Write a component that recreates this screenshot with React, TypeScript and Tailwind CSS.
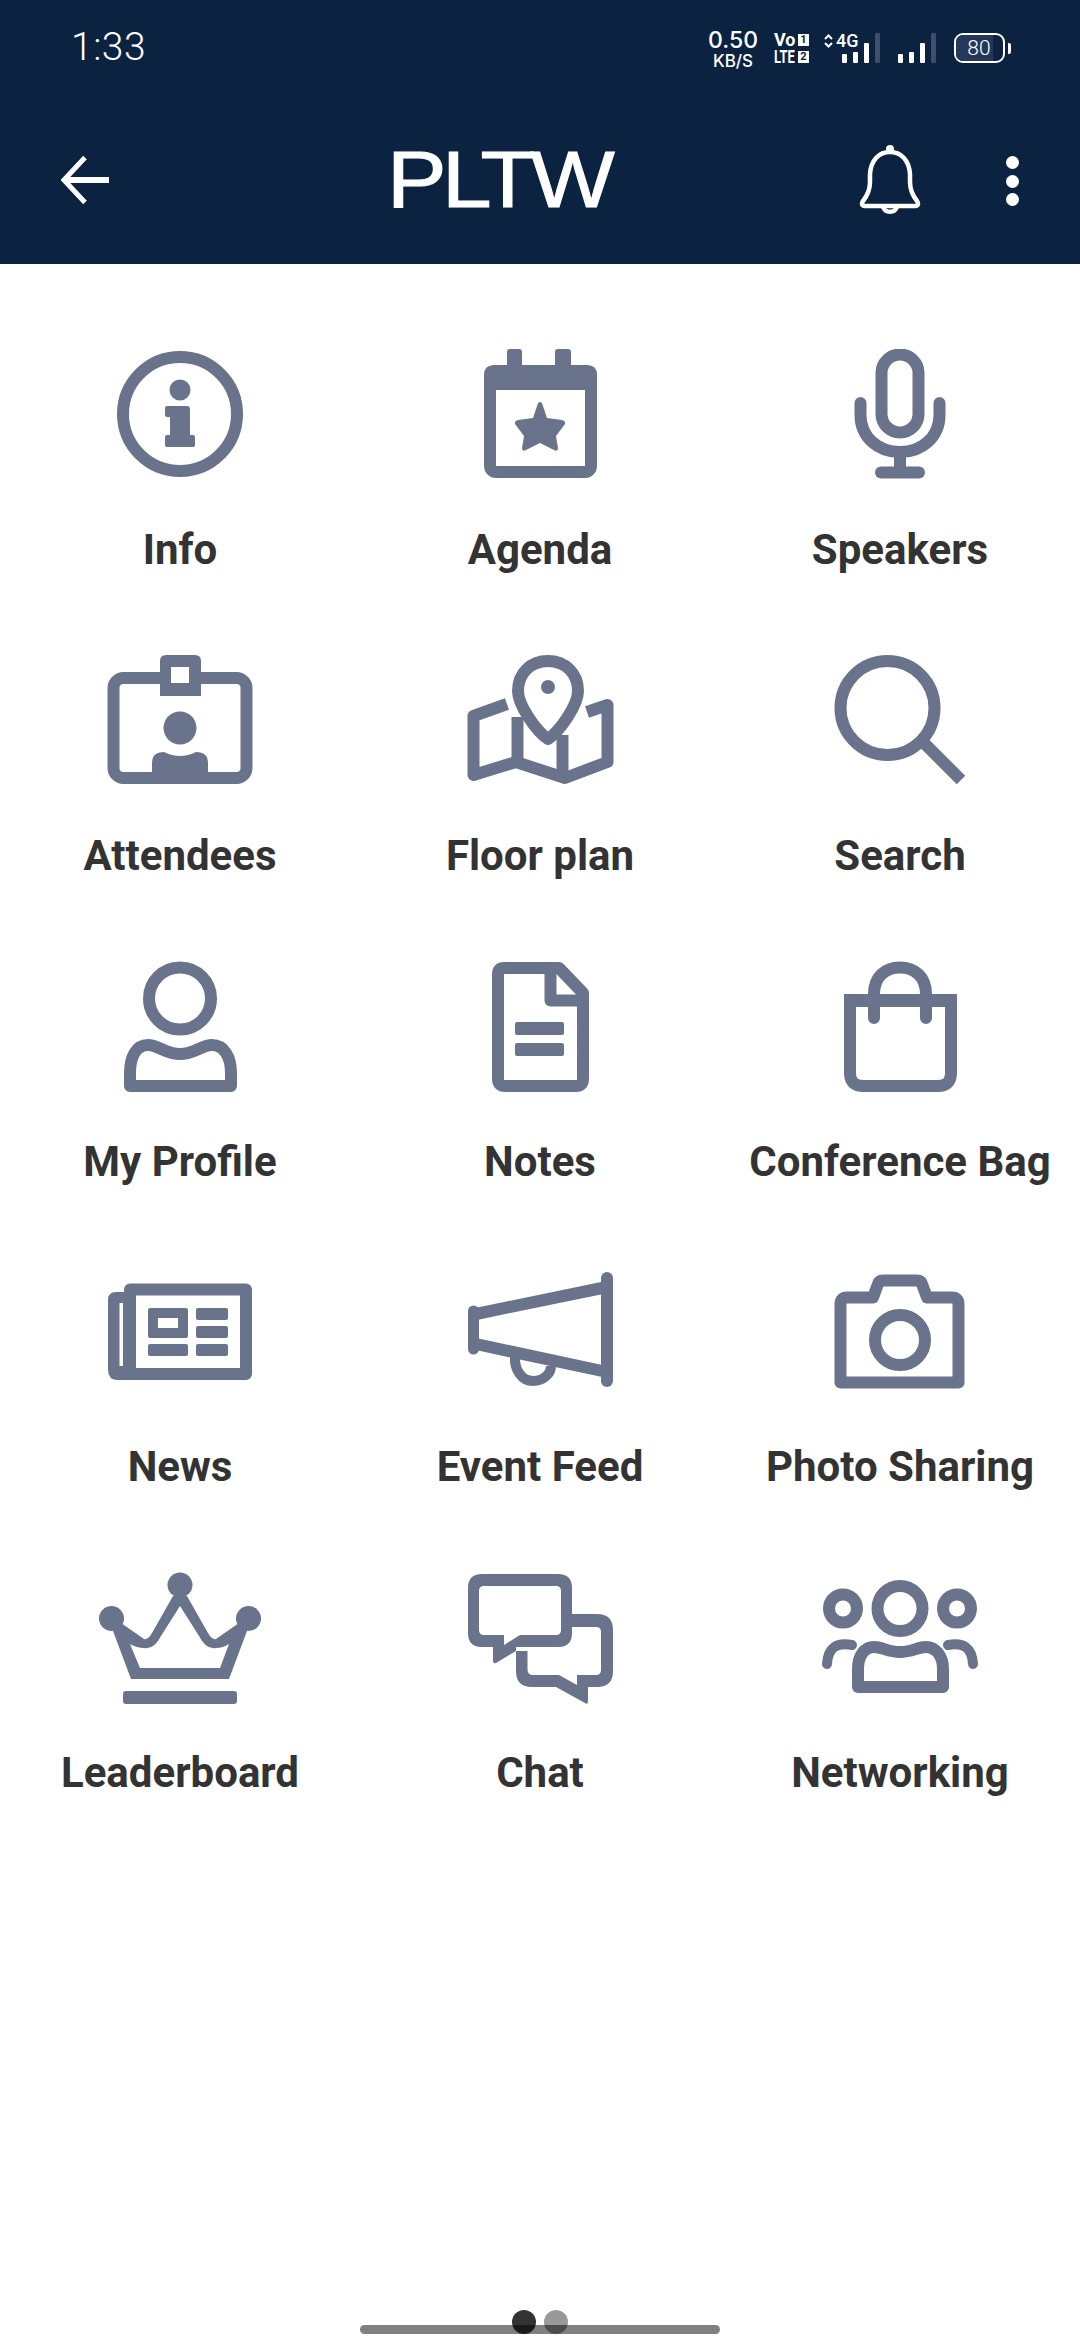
import { ReactNode } from "react";

type Item = {
  label: string;
  icon: ReactNode;
};

const icons = {
  info: (
    <>
      <circle cx="82" cy="65" r="57" />
      <g fill="currentColor" stroke="none">
        <circle cx="82" cy="41" r="10.5" />
        <path d="M69 57H89Q92 57 92 60V86H95Q97 86 97 88V96Q97 98 95 98H69Q67 98 67 96V88Q67 86 69 86H72V68H69Q67 68 67 66V59Q67 57 69 57Z" />
      </g>
    </>
  ),
  agenda: (
    <>
      <rect x="32" y="22" width="101" height="101" rx="6" />
      <g fill="currentColor" stroke="none">
        <path d="M26 41V26Q26 16 36 16H49V3Q49 0 52 0H61Q64 0 64 3V16H97V3Q97 0 100 0H110Q113 0 113 3V16H129Q139 16 139 26V41Z" />
        <path d="M82 53Q84 53 85 57L89 69L104 71Q108 72 107 75L98 87L100 99Q100 103 96 101L82 94L68 101Q64 103 64 99L66 87L57 75Q56 72 60 71L75 69L79 57Q80 53 82 53Z" />
      </g>
    </>
  ),
  speakers: (
    <>
      <rect x="63.5" y="5.5" width="37" height="78" rx="18.5" />
      <path d="M42.5 54V66C42.5 88 60 103 82 103S121.5 88 121.5 66V54" strokeLinecap="round" />
      <path d="M82 103V120" />
      <path d="M63 123.500H101" strokeLinecap="round" />
    </>
  ),
  attendees: (
    <>
      <rect x="15.500" y="23" width="133" height="100" rx="10" />
      <g fill="currentColor" stroke="none">
        <path fillRule="evenodd" d="M68 0H97Q103 0 103 6V41H62V6Q62 0 68 0ZM73 12V28H91V12Z" />
        <circle cx="82" cy="73" r="16.500" />
        <path d="M54 118V108Q54 97 66 97Q74 101 82 101T98 97Q110 97 110 108V118Z" />
      </g>
      <path d="M73 12V28H91V12Z" fill="#fff" stroke="none" />
    </>
  ),
  floorplan: (
    <>
      <path d="M90 6C73 6 60 18 60 36C60 50 78 76 90 84C102 76 120 50 120 36C120 18 107 6 90 6Z" strokeLinejoin="round" />
      <circle cx="90" cy="32" r="7" fill="currentColor" stroke="none" />
      <path d="M49 49L15.500 61V120L58 107L107 123L149.500 107V50L129 57" strokeLinejoin="round" />
      <path d="M59.500 62V107" />
      <path d="M104.500 80V123" />
    </>
  ),
  search: (
    <>
      <circle cx="69.500" cy="53" r="47" />
      <path d="M106 88L143 125" strokeWidth="12" />
    </>
  ),
  profile: (
    <>
      <circle cx="82" cy="37.500" r="31" />
      <path d="M32 125V112C32 96 38 84 50 84C60 84 68 93 82 93S104 84 114 84C126 84 133 96 133 112V125Z" strokeLinejoin="round" />
    </>
  ),
  notes: (
    <>
      <path d="M46 7H101L125 32V118Q125 125 118 125H47Q40 125 40 118V13Q40 7 46 7Z" strokeLinejoin="round" />
      <path d="M92.500 7V39.500H125" strokeLinejoin="round" />
      <g fill="currentColor" stroke="none">
        <rect x="57" y="61" width="49" height="13" rx="2" />
        <rect x="57" y="82" width="49" height="13" rx="2" />
      </g>
    </>
  ),
  bag: (
    <>
      <path d="M32 39.500H133V112Q133 125 120 125H45Q32 125 32 112Z" />
      <path d="M56 57V33C56 16 67 6.500 82 6.500S108 16 108 33V57" strokeLinecap="round" />
      <path d="M26 39.500H139" strokeWidth="13" />
    </>
  ),
  news: (
    <>
      <path d="M32 23.500H148V108H32Z" strokeLinejoin="round" />
      <g fill="currentColor" stroke="none">
        <path d="M36 26H18Q10 26 10 34V104Q10 114 20 114H36V104Q27 104 27 96V34Z" />
        <rect x="21.500" y="37" width="3.500" height="63" fill="#fff" />
        <path fillRule="evenodd" d="M52 42H88Q90 42 90 44V70Q90 72 88 72H52Q50 72 50 70V44Q50 42 52 42ZM60 52V62H80V52Z" />
        <rect x="98" y="42" width="32" height="12" rx="2" />
        <rect x="98" y="60" width="32" height="12" rx="2" />
        <rect x="50" y="78" width="40" height="12" rx="2" />
        <rect x="98" y="78" width="32" height="12" rx="2" />
      </g>
    </>
  ),
  feed: (
    <>
      <path d="M18 48L149 21M18 78L149 106" />
      <path d="M149 12V115" strokeLinecap="round" strokeWidth="12" />
      <path d="M15.500 45V83" strokeLinecap="round" strokeWidth="11" />
      <path d="M57 90C56 104 64 115 75 115C85 115 93 108 93 100" strokeWidth="10" />
    </>
  ),
  photo: (
    <>
      <path d="M22.500 38Q22.500 31.500 29 31.500H55L60 18Q61 14.500 65 14.500H99Q103 14.500 104 18L109 31.500H134Q140.500 31.500 140.500 38V116.500H22.500Z" strokeLinejoin="round" />
      <circle cx="82" cy="74" r="25" />
    </>
  ),
  leaderboard: (
    <g fill="currentColor" stroke="none">
      <path
        fillRule="evenodd"
        d="M75 24L54 61Q50 68 46 67L24.500 52L15 59L33 107H131L149 59L139.500 52L118 67Q114 68 110 61L89 24ZM82 34L101 64Q108 78 118 76Q125 76 131 72L122 96H42L32 72Q39 76 46 76Q56 78 63 64Z"
      />
      <circle cx="82" cy="13" r="12.500" />
      <circle cx="13.500" cy="46.500" r="12.500" />
      <circle cx="150.500" cy="46.500" r="12.500" />
      <rect x="25" y="119" width="114" height="13" rx="3" />
    </g>
  ),
  chat: (
    <g fill="currentColor" stroke="none">
      <path
        fillRule="evenodd"
        d="M24 2H100Q114 2 114 16V61Q114 75 100 75H58V79L38 91Q35 92 35 89V75H24Q10 75 10 61V16Q10 2 24 2ZM26 14Q21 14 21 19V58Q21 63 26 63H46V73L62 63H98Q103 63 103 58V19Q103 14 98 14Z"
      />
      <path d="M114 42H139Q155 42 155 58V99Q155 115 139 115H130V129Q130 133 127 131L98 115H74Q58 115 58 99V79H69.500V97Q69.500 103 75 103H101L119 113V103H138Q143 103 143 98V60Q143 55 138 55H114Z" />
    </g>
  ),
  networking: (
    <>
      <circle cx="82" cy="36.500" r="22.500" />
      <circle cx="25" cy="36.500" r="14" />
      <circle cx="139" cy="36.500" r="14" />
      <path d="M40 115V97C40 83 47 75 56 75C64 75 70 80 82 80S100 75 108 75C117 75 125 83 125 97V115Z" strokeLinejoin="round" />
      <path d="M34 73C18 70 10 76 9 92" strokeLinecap="round" strokeWidth="10" />
      <path d="M130 73C146 70 154 76 155 92" strokeLinecap="round" strokeWidth="10" />
    </>
  ),
};

const items: Item[] = [
  { label: "Info", icon: icons.info },
  { label: "Agenda", icon: icons.agenda },
  { label: "Speakers", icon: icons.speakers },
  { label: "Attendees", icon: icons.attendees },
  { label: "Floor plan", icon: icons.floorplan },
  { label: "Search", icon: icons.search },
  { label: "My Profile", icon: icons.profile },
  { label: "Notes", icon: icons.notes },
  { label: "Conference Bag", icon: icons.bag },
  { label: "News", icon: icons.news },
  { label: "Event Feed", icon: icons.feed },
  { label: "Photo Sharing", icon: icons.photo },
  { label: "Leaderboard", icon: icons.leaderboard },
  { label: "Chat", icon: icons.chat },
  { label: "Networking", icon: icons.networking },
];

function SignalBars() {
  return (
    <div className="flex items-end gap-[6px]">
      <span className="h-[9px] w-[5px] rounded-[1px] bg-white" />
      <span className="h-[11px] w-[5px] rounded-[1px] bg-white" />
      <span className="h-[20px] w-[5px] rounded-[1px] bg-white" />
      <span className="h-[30px] w-[5px] rounded-[1px] bg-[#3f4f6b]" />
    </div>
  );
}

function StatusBar() {
  return (
    <div className="flex h-[96px] items-start justify-between pl-[71px] pr-[69px] pt-[26px] text-white">
      <span className="mt-[-1px] text-[39px] font-light leading-[44px] tracking-[0.5px]">1:33</span>
      <div className="mt-[7px] flex items-start">
        <div className="mt-[-4px] flex w-[56px] flex-col items-center font-['Inter',sans-serif] font-medium">
          <span className="text-[23px] leading-[22px]">0.50</span>
          <span className="mt-[1px] text-[17px] leading-[18px]">KB/S</span>
        </div>
        <div className="ml-[13px] mt-[1px] flex w-[35px] flex-col gap-[5px] text-[18px] font-bold leading-[12px]">
          <div className="flex items-center justify-between">
            <span>Vo</span>
            <span className="flex h-[12px] w-[11px] items-center justify-center bg-white text-[11px] text-[#0b2241]">1</span>
          </div>
          <div className="flex items-center justify-between">
            <span className="w-[21px] origin-left scale-x-[0.72] whitespace-nowrap">LTE</span>
            <span className="flex h-[12px] w-[11px] items-center justify-center bg-white text-[11px] text-[#0b2241]">2</span>
          </div>
        </div>
        <div className="relative ml-[15px] flex h-[30px] w-[56px] items-end justify-end">
          <span className="absolute left-[12px] top-0 text-[18px] font-medium leading-[16px]">4G</span>
          <svg viewBox="0 0 9 14" className="absolute left-0 top-[1px] h-[14px] w-[9px]" fill="none" stroke="white" strokeWidth="2">
            <path d="M1 5L4.500 1.500L8 5M1 9L4.500 12.500L8 9" />
          </svg>
          <SignalBars />
        </div>
        <div className="ml-[18px]">
          <SignalBars />
        </div>
        <div className="ml-[18px] flex items-center">
          <div className="relative h-[30px] w-[51px] overflow-hidden rounded-[9px] border-[2.5px] border-white">
            <div className="h-full w-[37px] bg-[#26385a]" />
            <span className="absolute inset-0 flex items-center justify-center pr-[1px] text-[21px] font-light leading-none">80</span>
          </div>
          <span className="ml-[3px] h-[11px] w-[3px] rounded-r-[2px] bg-white" />
        </div>
      </div>
    </div>
  );
}

function Toolbar() {
  return (
    <div className="flex h-[168px] items-start text-white">
      <svg viewBox="0 0 48 48" className="ml-[61px] mt-[60px] h-[48px] w-[48px]" fill="none" stroke="white">
        <path d="M48 24H3" strokeWidth="6" />
        <path d="M24 1.500L3 24L24 46.500" strokeWidth="5" />
      </svg>
      <span className="ml-[278px] mt-[39px] w-[224px] origin-left scale-x-[1.13] font-['Liberation_Sans',sans-serif] text-[79px] leading-[90px] tracking-[-4px] [-webkit-text-stroke:1px_white]">
        PLTW
      </span>
      <svg viewBox="0 0 62 72" className="ml-[248px] mt-[48px] h-[72px] w-[62px]" fill="none" stroke="white" strokeWidth="4.500">
        <circle cx="31" cy="5" r="4" fill="white" stroke="none" />
        <path d="M31 8C20 8 12 16 11 30V38C11 46 8 52 4 57Q1 62 7 62H55Q61 62 58 57C54 52 51 46 51 38V30C50 16 42 8 31 8Z" strokeLinejoin="round" />
        <path d="M24 63A7.500 7.500 0 0 0 38 63" />
      </svg>
      <div className="ml-[85px] mt-[60px] flex flex-col gap-[5.500px]">
        <span className="h-[13px] w-[13px] rounded-full bg-white" />
        <span className="h-[13px] w-[13px] rounded-full bg-white" />
        <span className="h-[13px] w-[13px] rounded-full bg-white" />
      </div>
    </div>
  );
}

function MenuTile({ label, icon }: Item) {
  return (
    <div className="flex flex-col items-center">
      <svg viewBox="0 0 164 134" className="h-[134px] w-[164px] text-[#6a738c]" fill="none" stroke="currentColor" strokeWidth="12">
        {icon}
      </svg>
      <p className="mt-[43px] whitespace-nowrap text-[42px] font-bold leading-[48px] text-[#333333]">{label}</p>
    </div>
  );
}

export default function App() {
  return (
    <div className="relative flex h-[2340px] w-[1080px] flex-col bg-white font-['Roboto',sans-serif]">
      <header className="bg-[#0b2241]">
        <StatusBar />
        <Toolbar />
      </header>
      <main className="grid grid-cols-3 gap-y-[80.750px] pt-[85px]">
        {items.map((item) => (
          <MenuTile key={item.label} {...item} />
        ))}
      </main>

      <div className="mt-auto mb-[6px] flex justify-center">
        <div className="relative h-[9px] w-[360px] rounded-full bg-[#808080]">
          <span className="absolute bottom-0 left-[152px] h-[24px] w-[24px] rounded-full bg-black/80" />
          <span className="absolute bottom-0 left-[184px] h-[24px] w-[24px] rounded-full bg-black/40" />
        </div>
      </div>
    </div>
  );
}
